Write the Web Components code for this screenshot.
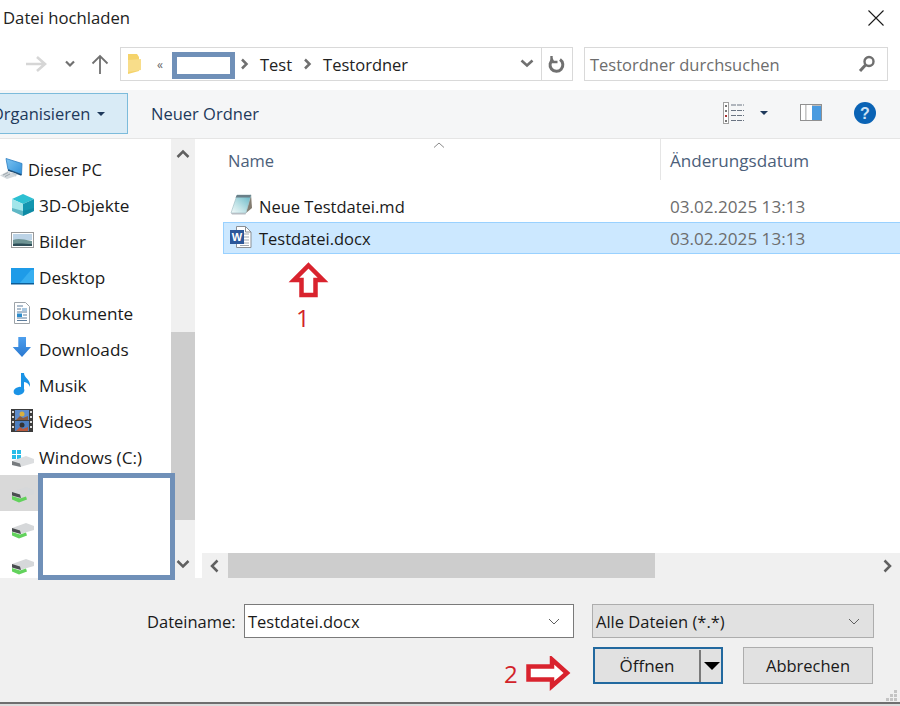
<!DOCTYPE html>
<html lang="de"><head><meta charset="utf-8"><title>Datei hochladen</title>
<style>
html,body{margin:0;padding:0;background:#fff}
body{width:900px;height:706px;overflow:hidden;font:17px "Open Sans","Noto Sans",sans-serif;color:#1a1a1a}
</style></head><body>
<file-dialog>
  <title-bar>Datei hochladen</title-bar>
  <address-bar></address-bar>
  <tool-bar></tool-bar>
  <main-pane>
    <nav-tree slot="tree">
      <tree-item level="0"><svg slot="icon" width="24" height="24" viewBox="0 0 24 24"><defs><linearGradient id="m" x1="0" y1="0" x2="1" y2="1"><stop offset="0" stop-color="#7cc4f2"/><stop offset="1" stop-color="#2f8fd8"/></linearGradient></defs><path d="M6 1.500L22 6.500 21.500 17.500 8 12.500z" fill="url(#m)" stroke="#2a7cc0" stroke-width=".8"/><path d="M8 13l13.500 5" stroke="#1e4f78" stroke-width="1.400"/><path d="M12 15l5 2-1 2.500-5-2z" fill="#c4ccd2"/><path d="M0 18.500L8 14l8 5-9 3z" fill="#d2d8dc"/><path d="M3 18l5-2.500M5 19.500l5-2.500" stroke="#9aa4aa"/></svg>Dieser PC</tree-item>
      <tree-item><svg slot="icon" width="24" height="24" viewBox="0 0 24 24"><path d="M12 1l11 5-11 5L1 6z" fill="#2dc0d2"/><path d="M1 6l11 5v12L1 18z" fill="#a2e6ea"/><path d="M23 6l-11 5v12l11-5z" fill="#1296b0"/><path d="M1 15l11 3 11-3v3l-11 5L1 18z" fill="#0d7f98" opacity=".45"/></svg>3D-Objekte</tree-item>
      <tree-item><svg slot="icon" width="24" height="18" viewBox="0 0 24 18"><rect x=".5" y=".5" width="22" height="15" fill="#fff" stroke="#9a9a9a"/><rect x="2" y="2" width="19" height="6" fill="#bcd3e6"/><path d="M2 8c5-2 9-1 19 1v5H2z" fill="#6f9494"/><path d="M2 12c6-1 12 0 19 0v2H2z" fill="#2f4f58"/></svg>Bilder</tree-item>
      <tree-item><svg slot="icon" width="24" height="18" viewBox="0 0 24 18"><rect x="0" y="0" width="23" height="16" fill="#1e9be8"/><path d="M8 16L20 2h3v14z" fill="#37aef0"/><rect x="0" y="15" width="23" height="1.500" fill="#0c5c96"/></svg>Desktop</tree-item>
      <tree-item><svg slot="icon" width="24" height="24" viewBox="0 0 24 24"><path d="M3.500 1.500h11l4 4v17h-15z" fill="#fff" stroke="#9da3a8"/><path d="M6 5h6M6 8h4M6 11h10M12 14h4M6 17h10M6 19.500h10" stroke="#5c7c9c"/><rect x="6" y="12.500" width="5" height="3.500" fill="#2d8ccc"/><path d="M11 7h5v3h-5z" fill="#aac8e0"/></svg>Dokumente</tree-item>
      <tree-item><svg slot="icon" width="24" height="24" viewBox="0 0 24 24"><defs><linearGradient id="dl" x1="0" y1="0" x2="0" y2="1"><stop offset="0" stop-color="#4d9fee"/><stop offset="1" stop-color="#2a78d0"/></linearGradient></defs><path d="M7.300 0H15V10h5L11 20 1.700 10H7.300z" fill="url(#dl)"/></svg>Downloads</tree-item>
      <tree-item><svg slot="icon" width="24" height="24" viewBox="0 0 24 24"><ellipse cx="8" cy="18" rx="5.500" ry="4" fill="#1a93e6" transform="rotate(-15 8 18)"/><path d="M10 0h3c0 5 7 6.500 6 14-1-3-3-4.500-6-5v9h-3z" fill="#1a93e6"/></svg>Musik</tree-item>
      <tree-item><svg slot="icon" width="24" height="24" viewBox="0 0 24 24"><rect width="22" height="23" fill="#3c3c3c"/><rect x="4" y="1" width="14" height="10" fill="#5f8dcc"/><rect x="4" y="12" width="14" height="10" fill="#4d7fc0"/><path d="M5 11l4-4 3 2 5-2v4z" fill="#8a5a3c"/><circle cx="11" cy="5" r="2.500" fill="#d9b03c"/><path d="M5 22l4-4 3 2 5-2v4z" fill="#b85a3c"/><circle cx="11" cy="16" r="2.500" fill="#333"/><path d="M1 2h2v2H1zM1 7h2v2H1zM1 12h2v2H1zM1 17h2v2H1zM19 2h2v2h-2zM19 7h2v2h-2zM19 12h2v2h-2zM19 17h2v2h-2z" fill="#ddd"/></svg>Videos</tree-item>
      <tree-item><svg slot="icon" width="24" height="20" viewBox="0 0 24 20"><path d="M1 3h4v4H1zM6 3h4v4H6zM1 8h4v4H1zM6 8h4v4H6z" fill="#28bce8"/><path d="M1 14l14-5 8 3v4L9 20l-8-2z" fill="#dcdee0"/><path d="M1 14l8 2.500 1 3.500-9-2z" fill="#777b7e"/></svg>Windows (C:)</tree-item>
      <tree-item selected><drive-icon slot="icon"></drive-icon></tree-item>
      <tree-item><drive-icon slot="icon"></drive-icon></tree-item>
      <tree-item><drive-icon slot="icon"></drive-icon></tree-item>
    </nav-tree>
    <file-list slot="files">
      <file-row date="03.02.2025 13:13"><svg slot="icon" width="26" height="24" viewBox="0 0 26 24"><defs><linearGradient id="np" x1="1" y1="0" x2="0" y2="1"><stop offset="0" stop-color="#5fb4c4"/><stop offset=".6" stop-color="#bfe2e6"/><stop offset="1" stop-color="#f4fafa"/></linearGradient></defs><path d="M22 0l1 14-6 5z" fill="#837c70"/><path d="M8 1h14l-5 18H2z" fill="url(#np)" stroke="#9ab8c0" stroke-width=".6"/><path d="M8 1h14l-1 2.500H6.500z" fill="#6a7f88"/><path d="M2 19h15l-.5 1.500H3z" fill="#b8bec4"/></svg>Neue Testdatei.md</file-row>
      <file-row selected date="03.02.2025 13:13"><svg slot="icon" width="26" height="24" viewBox="0 0 26 24"><path d="M7.500 .5h9l5.500 5.500v15.500H7.500z" fill="#fff" stroke="#8a8f94"/><path d="M16.500 .5v5.500H22" fill="none" stroke="#8a8f94"/><path d="M14 8h6M14 11h6M14 14h6M14 17h6M11 19.500h9" stroke="#a0a8b0"/><rect x="1" y="4" width="14" height="14" fill="#2b579a"/><text x="8" y="15" font-size="11" font-weight="700" text-anchor="middle" fill="#fff" font-family="Liberation Sans">W</text></svg>Testdatei.docx</file-row>
    </file-list>
  </main-pane>
  <dialog-footer></dialog-footer>
  <window-edge></window-edge>
  <redact-box style="left:172px;top:52px;width:63px;height:27px"></redact-box>
  <redact-box style="left:38px;top:473px;width:137px;height:107px"></redact-box>
  <note-arrow dir="up" style="left:288px;top:262px"></note-arrow>
  <note-label style="left:296px;top:302px">1</note-label>
  <note-arrow dir="right" style="left:526px;top:656px"></note-arrow>
  <note-label style="left:504px;top:658px">2</note-label>
</file-dialog>
<script>
function def(name, css, html){
  customElements.define(name, class extends HTMLElement{
    constructor(){super();const r=this.attachShadow({mode:'open'});
      r.innerHTML='<style>'+css+'</style>'+(typeof html==='function'?html(this):html);}
  });
}
const chev=(d,c='#606060')=>'<svg width="14" height="14" viewBox="0 0 14 14"><path d="'+d+'" fill="none" stroke="'+c+'" stroke-width="2.500"/></svg>';
def('file-dialog',':host{display:flex;flex-direction:column;position:relative;width:900px;height:706px;overflow:hidden}','<slot></slot>');
def('window-edge',':host{display:block;height:2px;flex:none;background:#dcdcdc}','');
def('title-bar',':host{display:flex;align-items:center;justify-content:space-between;height:45px;box-sizing:border-box;padding:0 15px 10px 3px;font-size:16.700px;color:#222}svg{display:block}',
 '<slot></slot><svg width="18" height="18" viewBox="0 0 18 18"><path d="M1.500 1.500l15 15M16.500 1.500l-15 15" stroke="#1a1a1a" stroke-width="1.100"/></svg>');
def('address-bar',`:host{display:flex;align-items:center;height:45px;box-sizing:border-box;padding:2px 12px 9px 0;font-size:16.500px}
 .navs{display:flex;align-items:center;width:120px;flex:none;padding-left:25px;box-sizing:border-box}
 .navs svg{display:block}
 .addr{flex:none;width:453px;height:34px;box-sizing:border-box;border:1px solid #d9d9d9;display:flex;align-items:center;margin-right:11px}
 .folder{margin:0 0 0 6px}
 .ll{font-size:12px;color:#666;margin:0 0 0 15px;width:70px}
 .gapx{width:13px}
 .sep{margin:0 7px 0 0;width:9px;display:block}
 .t{margin:0 11px 0 4px;color:#222}
 .sp{flex:1}
 .dd{width:22px;display:flex;justify-content:center}
 .ref{width:30px;height:100%;border-left:1px solid #d9d9d9;margin-left:3px;display:flex;align-items:center;justify-content:center}
 .search{flex:1;height:34px;box-sizing:border-box;border:1px solid #d9d9d9;display:flex;align-items:center;justify-content:space-between;padding:0 11px 0 5px;color:#6d6d6d}
 `,`<div class="navs">
   <svg width="22" height="18" viewBox="0 0 22 18"><path d="M1 9h19M12 2l8 7-8 7" fill="none" stroke="#d6d6d6" stroke-width="2.600"/></svg>
   <svg style="margin-left:18px" width="10" height="10" viewBox="0 0 10 10"><path d="M1 2.500l4 4 4-4" fill="none" stroke="#707070" stroke-width="2.200"/></svg>
   <svg style="margin-left:16px" width="18" height="20" viewBox="0 0 18 20"><path d="M9 20V2M1.500 9.500L9 2l7.500 7.500" fill="none" stroke="#707070" stroke-width="1.800"/></svg>
  </div>
  <div class="addr">
   <svg class="folder" width="15" height="22" viewBox="0 0 15 22"><path d="M1 1h9l2 3v14l-11 3z" fill="#f5d36a"/><path d="M1 7l13-1v11L1 19z" fill="#f8dd8a"/></svg>
   <span class="ll">«</span>
   <span class="gapx"></span>
   <svg class="sep" width="9" height="12" viewBox="0 0 9 12"><path d="M2 1.500L6.500 6 2 10.500" fill="none" stroke="#707070" stroke-width="2.500"/></svg>
   <span class="t">Test</span>
   <svg class="sep" width="9" height="12" viewBox="0 0 9 12"><path d="M2 1.500L6.500 6 2 10.500" fill="none" stroke="#707070" stroke-width="2.500"/></svg>
   <span class="t">Testordner</span>
   <span class="sp"></span>
   <span class="dd"><svg width="14" height="10" viewBox="0 0 14 10"><path d="M1.500 1.500l5.500 5 5.500-5" fill="none" stroke="#707070" stroke-width="2.600"/></svg></span>
   <span class="ref"><svg width="18" height="18" viewBox="0 0 18 18"><path d="M12 4.600a6.400 6.400 0 1 1-6.800-.2" fill="none" stroke="#707070" stroke-width="3"/><path d="M3.500 1v6h6" fill="none" stroke="#707070" stroke-width="2.400"/></svg></span>
  </div>
  <div class="search"><span>Testordner durchsuchen</span><svg width="18" height="18" viewBox="0 0 18 18"><circle cx="11" cy="6.500" r="4.500" fill="none" stroke="#6f6f6f" stroke-width="2.400"/><path d="M7.500 10L2 16" stroke="#6f6f6f" stroke-width="3"/></svg></div>`);
def('tool-bar',`:host{display:flex;align-items:center;height:49px;box-sizing:border-box;background:#f5f6f7;border-bottom:1px solid #e5e5e5;font-size:16.500px;color:#1e395b}
 .org{margin-left:-6px;width:134px;height:41px;box-sizing:border-box;border:1px solid #7cbbdb;background:#d9ebf6;display:flex;align-items:center;gap:7px;margin-top:-1px;white-space:nowrap}
 .org span:first-child{margin-left:-4px}
 .caret{border:4px solid transparent;border-top:4px solid #1e395b;border-bottom:0;width:0;height:0}
 .new{margin-left:23px;margin-top:-1px}
 .sp{flex:1}
 .ic{display:flex;align-items:center;margin-top:-3px}`,
 `<div class="org"><span>Organisieren</span><span class="caret"></span></div><span class="new">Neuer Ordner</span><span class="sp"></span>
  <span class="ic" style="margin-right:15px"><svg width="22" height="22" viewBox="0 0 22 22"><rect x=".5" y=".5" width="5" height="21" fill="#fff" stroke="#a0a0a0"/><path d="M2 3h2v2H2zM2 8h2v2H2zM2 13h2v2H2zM2 18h2v2H2z" fill="#777"/><path d="M2 13h2v2H2z" fill="#a33"/><path d="M8 3h13M8 8.500h13M8 13.500h13M8 18.500h13" stroke="#6a7482" stroke-dasharray="5 1"/></svg></span>
  <span class="caret" style="margin:-3px 32px 0 0;border-width:4.500px 4.500px 0;border-top-color:#1e395b"></span>
  <span class="ic" style="margin-right:32px"><svg width="22" height="18" viewBox="0 0 22 18"><rect x=".5" y=".5" width="21" height="16" fill="#fff" stroke="#909090"/><rect x="5.500" y="1" width=".8" height="15" fill="#909090"/><rect x="12" y="2" width="9" height="14" fill="#4a9be0"/><rect x="12" y="1" width="9" height="1" fill="#bbb"/></svg></span>
  <span class="ic" style="margin-right:24px"><svg width="22" height="22" viewBox="0 0 22 22"><circle cx="11" cy="11" r="11" fill="#0a63b5"/><text x="11" y="17" font-size="16" font-weight="700" text-anchor="middle" fill="#cfe3f5" font-family="Liberation Sans">?</text></svg></span>`);
def('main-pane',`:host{display:flex;height:439px;flex:none;background:#fff}
 .gap{width:7px;flex:none}`,
 '<slot name="tree"></slot><span class="gap"></span><slot name="files"></slot>');
def('nav-tree',`:host{display:flex;width:195px;flex:none;height:439px}
 .list{flex:1;min-width:0;overflow:hidden;padding-top:12px;box-sizing:border-box}
 .bar{width:24px;flex:none;background:#f0f0f0;display:flex;flex-direction:column;align-items:center}
 .ar{height:30px;display:flex;align-items:center;justify-content:center;flex:none}
 .track{flex:1;width:100%}
 .thumb{height:188px;width:100%;background:#cdcdcd;margin-top:163px}`,
 `<div class="list"><slot></slot></div><div class="bar"><span class="ar">${chev('M1.500 10l5.500-5.500L12.500 10')}</span><div class="track"><div class="thumb"></div></div><span class="ar" style="height:28px">${chev('M1.500 4l5.500 5.500L12.500 4')}</span></div>`);
def('tree-item',`:host{display:flex;align-items:center;height:36px;padding-left:11px;white-space:nowrap;color:#1a1a1a;font-size:17.200px}
 :host([level="0"]){padding-left:0;font-size:16.500px}
 :host([selected]){background:#d9d9d9}
 .i{width:28px;flex:none;display:flex;align-items:center}
 ::slotted(svg){display:block}`,'<span class="i"><slot name="icon"></slot></span><slot></slot>');
def('drive-icon',':host{display:block}svg{display:block}','<svg width="24" height="20" viewBox="0 0 24 20"><path d="M1 9l14-5 8 3v4L9 15l-8-2.500z" fill="#d6d8da"/><path d="M1 9l8 2.500 1 3.500-9-2.500z" fill="#4a4d50"/><path d="M1 13l8 2.500 6-2 1 3-8 3-7-3z" fill="#62d25c"/></svg>');
def('file-list',`:host{display:flex;flex-direction:column;flex:1;min-width:0;height:439px;color:#1a1a1a}
 .head{height:41px;display:flex;box-sizing:border-box;flex:none;font-size:16.500px;color:#4c607a;position:relative}
 .n{width:459px;box-sizing:border-box;padding-left:26px;padding-top:10px;border-right:1px solid #e5e5e5}
 .d{padding-left:9px;padding-top:10px;white-space:nowrap;font-size:17.100px}
 .sort{position:absolute;left:231px;top:3px}
 .rows{flex:1;padding:10px 0 0 21px;overflow:hidden}
 .hs{height:25px;flex:none;display:flex;align-items:stretch;background:#f0f0f0}
 .a{width:26px;display:flex;align-items:center;justify-content:center}
 .ht{width:427px;background:#cdcdcd}
 .tr{flex:1}`,
 `<div class="head"><div class="n">Name</div><div class="d">Änderungsdatum</div><svg class="sort" width="12" height="6" viewBox="0 0 12 6"><path d="M1 5.500l5-4.500 5 4.500" fill="none" stroke="#8a8a8a"/></svg></div>
  <div class="rows"><slot></slot></div>
  <div class="hs"><span class="a">${chev('M9.500 1.500L4 7l5.500 5.500')}</span><div class="ht"></div><span class="tr"></span><span class="a">${chev('M4.500 1.500L10 7l-5.500 5.500')}</span></div>`);
def('file-row',`:host{display:flex;align-items:center;height:32px;box-sizing:border-box;border:1px solid transparent;padding-left:5px;white-space:nowrap;font-size:16.500px;margin-right:-1px}
 :host([selected]){background:#cce8ff;border-color:#99d1ff}
 .i{width:30px;flex:none;display:flex}
 .name{width:411px;flex:none}
 .date{color:#6d6d6d;font-size:17.100px}
 ::slotted(svg){display:block}`,
 function(h){return '<span class="i"><slot name="icon"></slot></span><span class="name"><slot></slot></span><span class="date">'+h.getAttribute('date')+'</span>'});
def('dialog-footer',`:host{display:block;flex:1;background:#f0f0f0;position:relative;font-size:16.500px;color:#1a1a1a;box-sizing:border-box;border-bottom:2px solid #6e6e6e;padding:26px 26px 0 147px}
 .row{display:flex;align-items:center;height:34px}
 .lab{width:97px;flex:none}
 .combo{height:34px;box-sizing:border-box;display:flex;align-items:center;justify-content:space-between;padding:0 13px 0 3px}
 .fn{width:330px;background:#fff;border:1px solid #7a7a7a;flex:none}
 .ft{width:282px;margin-left:18px;background:#e1e1e1;border:1px solid #adadad;flex:none}
 .btns{display:flex;margin-top:9px;margin-left:446px}
 .btn{height:37px;box-sizing:border-box;display:flex;align-items:center;justify-content:center;background:#e1e1e1;flex:none}
 .open{width:130px;border:2px solid #22699f;justify-content:flex-start}
 .open .l{width:104px;text-align:center;font-size:17px}
 .open .s{width:2px;height:32px;background:#7a7a7a}
 .open .c{border:8px solid transparent;border-top:8px solid #000;border-bottom:0;margin-left:3px;width:0;height:0}
 .cancel{width:130px;margin-left:20px;border:1px solid #adadad}
 .grip{position:absolute;right:2px;bottom:0;display:block}`,
 `<div class="row"><span class="lab">Dateiname:</span>
   <div class="combo fn"><span>Testdatei.docx</span><svg width="12" height="7" viewBox="0 0 12 7"><path d="M1 1l5 5 5-5" fill="none" stroke="#606060"/></svg></div>
   <div class="combo ft"><span>Alle Dateien (*.*)</span><svg width="12" height="7" viewBox="0 0 12 7"><path d="M1 1l5 5 5-5" fill="none" stroke="#606060"/></svg></div></div>
  <div class="btns"><div class="btn open"><span class="l">Öffnen</span><span class="s"></span><span class="c"></span></div><div class="btn cancel">Abbrechen</div></div>
  <svg class="grip" width="12" height="12" viewBox="0 0 12 12"><path d="M8 0h3v3H8zM4 4h3v3H4zM8 4h3v3H8zM0 8h3v3H0zM4 8h3v3H4zM8 8h3v3H8z" fill="#c4c4c4"/></svg>`);
def('redact-box',':host{position:absolute;box-sizing:border-box;background:#fff;border:5px solid #7090b8;display:block}','');
def('note-label',':host{position:absolute;display:block;color:#d2232a;font-size:24px;line-height:32px}','<slot></slot>');
customElements.define('note-arrow',class extends HTMLElement{constructor(){super();const r=this.attachShadow({mode:'open'});
  const up=this.getAttribute('dir')==='up';
  r.innerHTML='<style>:host{position:absolute;display:block}svg{display:block}</style>'+(up
   ?'<svg width="42" height="38" viewBox="0 0 42 38"><path d="M20.500 3.500L35 18H27.500V33H13.500V18H6z" fill="#fff" stroke="#d9232e" stroke-width="4.500"/></svg>'
   :'<svg width="46" height="36" viewBox="0 0 46 36"><path d="M41 17L26 3.500V10.500H2.500V23.500H26V30z" fill="#fff" stroke="#d9232e" stroke-width="4.500"/></svg>');}});
</script>
</body></html>
